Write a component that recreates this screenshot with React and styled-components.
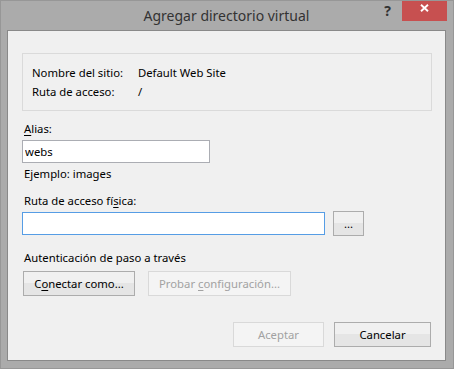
import React from "react";
import styled, { createGlobalStyle } from "styled-components";

const GlobalStyle = createGlobalStyle`
  html, body { margin: 0; padding: 0; background: #ffffff; }
  body { font-family: "Noto Sans", "Open Sans", sans-serif; }
`;

const Window = styled.div`
  width: 454px;
  height: 369px;
  box-sizing: border-box;
  border: 1px solid #979797;
  background: #ababab;
  display: flex;
  flex-direction: column;
  padding: 0 7px 7px 6px;
`;

const TitleBar = styled.div`
  height: 29px;
  flex: none;
  display: grid;
  grid-template-columns: 1fr auto 1fr;
  align-items: start;
`;

const Title = styled.div`
  grid-column: 2;
  font-size: 14px;
  line-height: 29px;
  color: #333333;
  white-space: nowrap;
`;

const Controls = styled.div`
  grid-column: 3;
  display: flex;
  justify-content: flex-end;
  align-items: flex-start;
  margin-right: -1px;
`;

const Help = styled.span`
  font-size: 14px;
  font-weight: 700;
  line-height: 20px;
  color: #333333;
  margin-right: 11px;
`;

const Close = styled.div`
  width: 45px;
  height: 20px;
  background: #c75050;
  display: flex;
  justify-content: center;
  padding-top: 3px;
  box-sizing: border-box;
`;

const Client = styled.div`
  flex: 1;
  border: 1px solid #898989;
  background: #f0f0f0;
  display: flex;
  flex-direction: column;
  padding: 22px 13px 13px 14px;
  font-size: 11.3px;
  color: #000000;
`;

const InfoBox = styled.div`
  border: 1px solid #dadada;
  padding: 9px 9px 9px 9px;
  display: grid;
  grid-template-columns: 106px 1fr;
  grid-auto-rows: 19px;
  line-height: 19px;
`;

const Label = styled.div`
  line-height: 16px;
  padding-left: 2px;
  margin-top: ${(p) => p.$gap}px;
`;

const Key = styled.span`
  text-decoration: underline;
  text-underline-offset: 2px;
`;

const TextBox = styled.input`
  box-sizing: border-box;
  width: ${(p) => p.$w}px;
  height: 23px;
  margin: ${(p) => p.$gap || 0}px 0 0 0;
  border: 1px solid ${(p) => (p.$focused ? "#569de5" : "#abadb3")};
  background: #ffffff;
  padding: 0 2px;
  font-family: inherit;
  font-size: 11.3px;
  color: #000000;
  outline: none;
`;

const Row = styled.div`
  display: flex;
  align-items: center;
  gap: ${(p) => p.$gap}px;
  margin-top: ${(p) => p.$top}px;
  padding-left: ${(p) => p.$pl || 0}px;
  padding-right: ${(p) => p.$pr || 0}px;
`;

const BottomRow = styled(Row)`
  margin-top: auto;
  justify-content: flex-end;
`;

const Button = styled.button`
  box-sizing: border-box;
  width: ${(p) => p.$w}px;
  height: 25px;
  padding: 0;
  border: 1px solid #acacac;
  background: linear-gradient(#f0f0f0 0%, #f0f0f0 48%, #e5e5e5 48%, #e5e5e5 100%);
  font-family: inherit;
  font-size: 11.3px;
  color: #000000;
  white-space: nowrap;

  &:disabled {
    border-color: #d9d9d9;
    background: #f4f4f4;
    color: #a2a2a2;
  }
`;

export default function App() {
  return (
    <>
      <GlobalStyle />
      <Window>
        <TitleBar>
          <Title>Agregar directorio virtual</Title>
          <Controls>
            <Help>?</Help>
            <Close>
              <svg width="9" height="8" viewBox="0 0 9 8">
                <path d="M1 0.8 L8 7.2 M8 0.8 L1 7.2" stroke="#ffffff" strokeWidth="1.9" />
              </svg>
            </Close>
          </Controls>
        </TitleBar>
        <Client>
          <InfoBox>
            <span>Nombre del sitio:</span>
            <span>Default Web Site</span>
            <span>Ruta de acceso:</span>
            <span>/</span>
          </InfoBox>
          <Label $gap={10}>
            <Key>A</Key>lias:
          </Label>
          <TextBox $w={188} $gap={3} defaultValue="webs" readOnly />
          <Label $gap={3}>Ejemplo: images</Label>
          <Label $gap={11}>
            Ruta de acceso fí<Key>s</Key>ica:
          </Label>
          <Row $gap={8} $top={2}>
            <TextBox $w={303} $focused defaultValue="" readOnly />
            <Button $w={31}>...</Button>
          </Row>
          <Label $gap={14}>Autenticación de paso a través</Label>
          <Row $gap={13} $top={5} $pl={1}>
            <Button $w={112}>
              C<Key>o</Key>nectar como...
            </Button>
            <Button $w={143} disabled>
              Probar <Key>c</Key>onfiguración...
            </Button>
          </Row>
          <BottomRow $gap={10} $top={0} $pr={1}>
            <Button $w={91} disabled>
              Aceptar
            </Button>
            <Button $w={97}>Cancelar</Button>
          </BottomRow>
        </Client>
      </Window>
    </>
  );
}
